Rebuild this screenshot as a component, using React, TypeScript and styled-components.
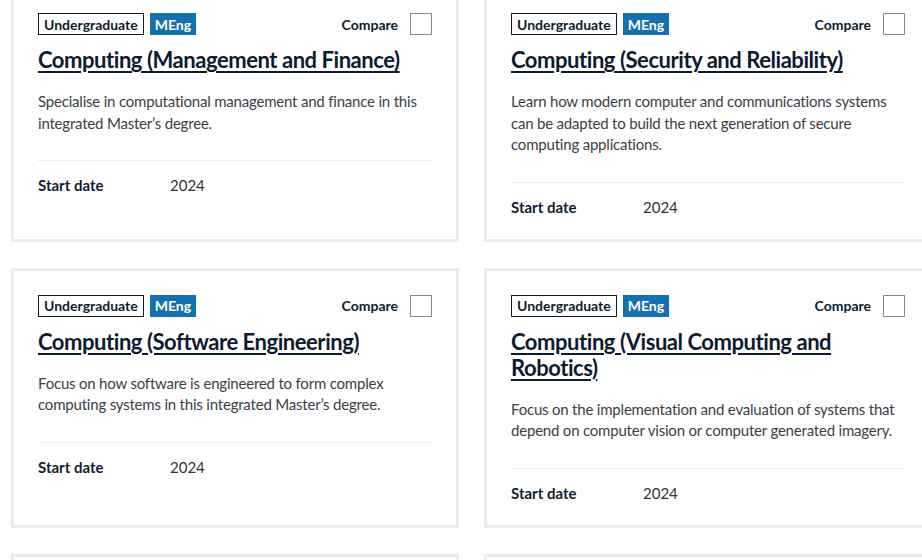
import React from "react";
import styled, { createGlobalStyle } from "styled-components";

const GlobalStyle = createGlobalStyle`
  html, body {
    margin: 0;
    padding: 0;
    background: #ffffff;
    overflow: hidden;
  }
  body {
    font-family: Lato, "Noto Sans", sans-serif;
    color: #0f1d2e;
  }
`;

const Page = styled.div`
  width: 922px;
  height: 560px;
  overflow: hidden;
`;

const Grid = styled.div`
  display: grid;
  grid-template-columns: 448px 448px;
  column-gap: 25px;
  row-gap: 26px;
  margin-top: -14px;
  padding-left: 11px;
`;

const Card = styled.article`
  display: flex;
  flex-direction: column;
  border: 3px solid #ebebeb;
  padding: 24px 24px 21px 24px;
  background: #fff;
`;

const Header = styled.div`
  display: flex;
  align-items: center;
  justify-content: space-between;
  height: 22px;
`;

const Tags = styled.div`
  display: flex;
  gap: 6px;
`;

const Tag = styled.span<{ $filled?: boolean }>`
  display: inline-flex;
  align-items: center;
  height: 22px;
  box-sizing: border-box;
  padding: 0 ${(p) => (p.$filled ? "4px" : "5px")};
  font-size: 14px;
  font-weight: 700;
  color: ${(p) => (p.$filled ? "#ffffff" : "#0f1d2e")};
  background: ${(p) => (p.$filled ? "#1570ad" : "transparent")};
  border: 1px solid ${(p) => (p.$filled ? "#1570ad" : "#0f1d2e")};
`;

const CompareLabel = styled.label`
  display: flex;
  align-items: center;
  gap: 12px;
  font-size: 14px;
  font-weight: 700;
  color: #0f1d2e;
`;

const CheckBox = styled.span`
  display: inline-block;
  width: 22px;
  height: 22px;
  box-sizing: border-box;
  border: 1px solid #8a8a8a;
  background: #fff;
`;

const Title = styled.a`
  display: block;
  margin-top: 12px;
  font-size: 22px;
  line-height: 26px;
  font-weight: 700;
  letter-spacing: -0.45px;
  color: #0d1b30;
  text-decoration: underline;
  text-decoration-thickness: 2px;
  text-underline-offset: 3px;
`;

const Description = styled.p`
  margin: 18px 0 0 0;
  font-size: 15px;
  line-height: 21.5px;
  letter-spacing: -0.2px;
  color: #3b3f45;
`;

const Divider = styled.hr`
  margin: 26px 0 0 0;
  border: none;
  border-top: 1px solid #ececec;
  height: 0;
`;

const MetaRow = styled.div`
  display: grid;
  grid-template-columns: 132px 1fr;
  margin-top: 14px;
  font-size: 15px;
  line-height: 21px;
`;

const MetaLabel = styled.span`
  font-weight: 700;
  color: #0f1d2e;
`;

const MetaValue = styled.span`
  color: #2e3338;
`;

type Course = { title: string; desc: string };

const courses: Course[] = [
  {
    title: "Computing (Management and Finance)",
    desc: "Specialise in computational management and finance in this integrated Master’s degree.",
  },
  {
    title: "Computing (Security and Reliability)",
    desc: "Learn how modern computer and communications systems can be adapted to build the next generation of secure computing applications.",
  },
  {
    title: "Computing (Software Engineering)",
    desc: "Focus on how software is engineered to form complex computing systems in this integrated Master’s degree.",
  },
  {
    title: "Computing (Visual Computing and Robotics)",
    desc: "Focus on the implementation and evaluation of systems that depend on computer vision or computer generated imagery.",
  },
  {
    title: "Computing (Artificial Intelligence and Machine Learning)",
    desc: "Study artificial intelligence and machine learning in this integrated Master’s degree.",
  },
  {
    title: "Computing (International Programme of Study)",
    desc: "Spend your third year studying at a partner university abroad.",
  },
];

export default function App() {
  return (
    <Page>
      <GlobalStyle />
      <Grid>
        {courses.map((c) => (
          <Card key={c.title}>
            <Header>
              <Tags>
                <Tag>Undergraduate</Tag>
                <Tag $filled>MEng</Tag>
              </Tags>
              <CompareLabel>
                Compare
                <CheckBox />
              </CompareLabel>
            </Header>
            <Title href="#">{c.title}</Title>
            <Description>{c.desc}</Description>
            <Divider />
            <MetaRow>
              <MetaLabel>Start date</MetaLabel>
              <MetaValue>2024</MetaValue>
            </MetaRow>
          </Card>
        ))}
      </Grid>
    </Page>
  );
}
